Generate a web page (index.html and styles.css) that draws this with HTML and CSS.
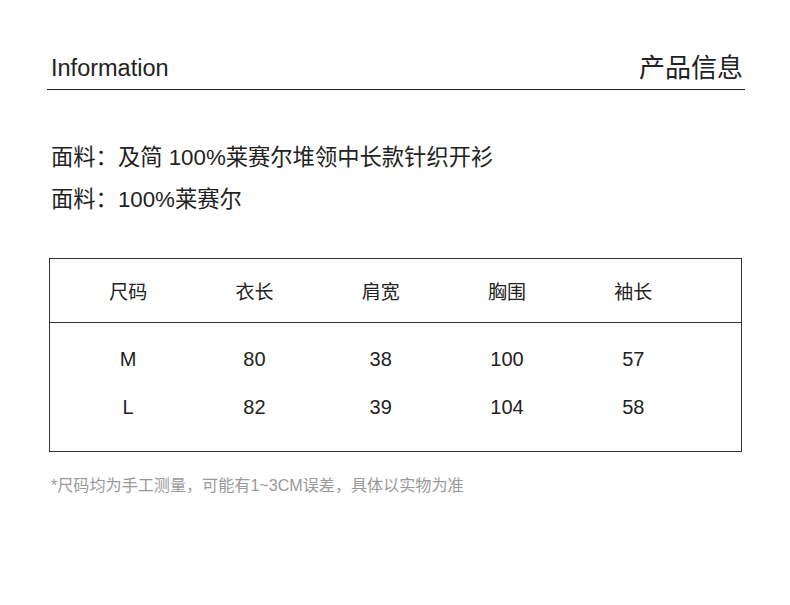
FILE: index.html
```html
<!DOCTYPE html>
<html lang="zh">
<head>
<meta charset="utf-8">
<link rel="stylesheet" href="styles.css">
</head>
<body>
<div class="page">
  <div class="header">
    <span class="title-en">Information</span>
    <span class="title-cn">产品信息</span>
  </div>
  <div class="material">
    <p class="mline">面料：及简 100%莱赛尔堆领中长款针织开衫</p>
    <p class="mline">面料：100%莱赛尔</p>
  </div>
  <div class="table">
    <div class="thead">
      <span class="cell">尺码</span>
      <span class="cell">衣长</span>
      <span class="cell">肩宽</span>
      <span class="cell">胸围</span>
      <span class="cell">袖长</span>
    </div>
    <div class="tbody">
      <div class="row">
        <span class="cell">M</span>
        <span class="cell">80</span>
        <span class="cell">38</span>
        <span class="cell">100</span>
        <span class="cell">57</span>
      </div>
      <div class="row">
        <span class="cell">L</span>
        <span class="cell">82</span>
        <span class="cell">39</span>
        <span class="cell">104</span>
        <span class="cell">58</span>
      </div>
    </div>
  </div>
  <p class="note">*尺码均为手工测量，可能有1~3CM误差，具体以实物为准</p>
</div>
</body>
</html>
```
FILE: styles.css
```css
* { box-sizing: border-box; }
html, body {
  margin: 0;
  padding: 0;
  background: #fff;
}
body {
  font-family: "Liberation Sans", "Noto Sans CJK SC", sans-serif;
  color: #222;
}
.page {
  width: 790px;
  padding: 0 45px 0 47px;
}
.header {
  height: 90px;
  display: flex;
  justify-content: space-between;
  align-items: flex-end;
  border-bottom: 1px solid #222;
  padding: 0 2px 6px 4px;
}
.title-en {
  font-size: 23.5px;
  line-height: 30px;
}
.title-cn {
  font-family: "Noto Sans CJK SC", sans-serif;
  font-size: 26px;
  line-height: 34px;
}
.material {
  margin-top: 47px;
  padding-left: 4px;
}
.mline {
  margin: 0;
  font-size: 22.3px;
  line-height: 42px;
}
.table {
  margin-top: 37px;
  margin-left: 2px;
  width: 693px;
  border: 1px solid #333;
}
.thead {
  display: flex;
  height: 64px;
  align-items: center;
  padding-left: 15px;
  border-bottom: 1px solid #333;
}
.tbody {
  padding: 12px 0 20px 15px;
}
.row {
  display: flex;
  height: 48px;
  align-items: center;
}
.cell {
  width: 126.3px;
  text-align: center;
  font-size: 20px;
}
.thead .cell {
  font-family: "Noto Sans CJK SC", sans-serif;
  font-size: 19px;
}
.note {
  margin: 21px 0 0 4px;
  font-size: 16.1px;
  line-height: 24px;
  color: #999;
}
```
